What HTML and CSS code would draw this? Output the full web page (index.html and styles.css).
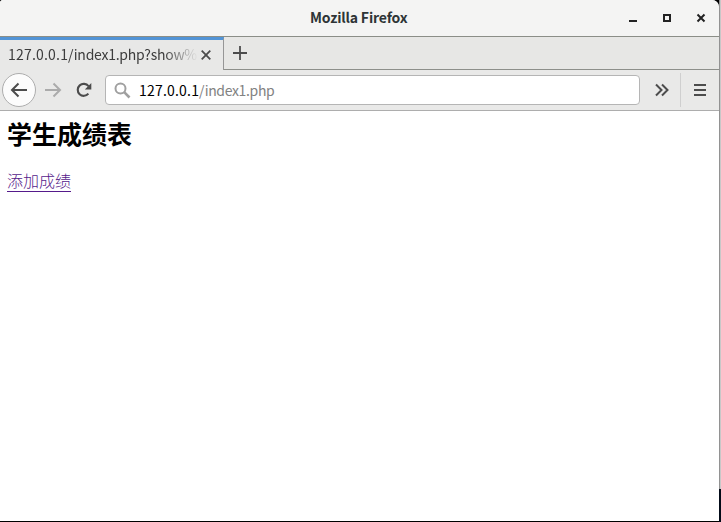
FILE: index.html
```html
<!DOCTYPE html>
<html lang="zh-CN">
<head>
<meta charset="utf-8">
<title>Mozilla Firefox</title>
<link rel="stylesheet" href="styles.css">
</head>
<body>
<div class="window">
  <header class="titlebar">
    <span class="title">Mozilla Firefox</span>
    <div class="controls">
      <svg width="10" height="10"><path d="M1 8H9" stroke-width="2"/></svg>
      <svg width="10" height="10"><rect x="2" y="2" width="6" height="6" stroke-width="2"/></svg>
      <svg width="10" height="10"><path d="M1.5 1.5L8.5 8.5M8.5 1.5L1.5 8.5" stroke-width="2"/></svg>
    </div>
  </header>
  <nav class="tabs">
    <div class="tab">
      <span class="tab-label"><span class="host">127.0.0.1</span>/index1.php?show%</span>
      <svg class="tab-close" width="10" height="10"><path d="M.7.7L9.3 9.3M9.3.7L.7 9.3"/></svg>
    </div>
    <div class="tab-rest">
      <svg width="14" height="14"><path d="M7 0V14M0 7H14"/></svg>
    </div>
  </nav>
  <div class="toolbar">
    <div class="back"><svg width="18" height="16"><path d="M17 8H2M8.5 1.5L2 8L8.5 14.5"/></svg></div>
    <svg class="forward" width="18" height="16"><path d="M1 8H16M9.5 1.5L16 8L9.5 14.5"/></svg>
    <svg class="reload" width="16" height="16"><path d="M12.4 11.6A6 6 0 1 1 12.5 4.2"/><path class="solid" d="M15.3 1V7.5H8.8Z"/></svg>
    <div class="urlbar">
      <svg width="17" height="17"><circle cx="6.5" cy="6.5" r="5"/><path d="M10.2 10.2L15.5 15.5" stroke-width="2.6"/></svg>
      <span class="url"><span class="host">127.0.0.1</span>/index1.php</span>
    </div>
    <svg class="more" width="14" height="14"><path d="M1 1.5L6.5 7L1 12.5M7 1.5L12.5 7L7 12.5"/></svg>
    <div class="menu"><svg width="12" height="12"><path d="M0 1H12M0 6H12M0 11H12"/></svg></div>
  </div>
  <main class="page">
    <h2>学生成绩表</h2>
    <a href="#">添加成绩</a>
  </main>
</div>
<div class="edge"></div>
</body>
</html>
```

FILE: styles.css
```css
* { box-sizing: border-box; }
body {
  margin: 0;
  height: 522px;
  display: flex;
  overflow: hidden;
  background: #000;
  font-family: "Noto Sans CJK SC", sans-serif;
}
svg { display: block; flex: none; fill: none; stroke: #4c4c4c; stroke-width: 2; }
.window {
  width: 719px;
  height: 521px;
  background: #fff;
  border-radius: 3px 7px 0 0;
  overflow: hidden;
  display: flex;
  flex-direction: column;
}
.edge {
  width: 2px;
  height: 522px;
  background: linear-gradient(90deg, #929292 1px, #c8c8c8 1px) no-repeat;
  background-size: 2px 489px;
  background-color: #030b18;
}
.titlebar {
  height: 37px;
  flex: none;
  display: flex;
  align-items: center;
  background: #f4f4f3;
  border-bottom: 1px solid #8b8e87;
}
.title {
  width: 98px;
  margin: -2px 0 0 310px;
  white-space: nowrap;
  font-size: 14px;
  line-height: 20px;
  font-weight: 700;
  letter-spacing: -0.17px;
  color: #2e3436;
}
.controls { display: flex; gap: 24px; margin-left: 220px; }
.controls svg { stroke: #222; }
.tabs { display: flex; flex: none; height: 33px; background: #e8e8e7; }
.tab {
  width: 224px;
  display: flex;
  align-items: center;
  padding-left: 8px;
  border-top: 3px solid #5294d6;
  border-right: 1px solid #969696;
}
.tab-label {
  width: 190px;
  margin-top: -2px;
  white-space: nowrap;
  font-size: 14px;
  line-height: 22px;
  letter-spacing: -0.25px;
  color: #3c3c3c;
  mask-image: linear-gradient(90deg, #000 155px, transparent 190px);
}
.host { letter-spacing: 0.2px; }
.tab-close { margin-left: 3px; }
.tab-close, .tab-rest svg { stroke-width: 1.8; }
.tab-rest {
  flex: 1;
  padding: 9px 0 0 9px;
  background: #e7e7e5;
  border-bottom: 1px solid #8d8f8a;
}
.toolbar {
  height: 41px;
  flex: none;
  display: flex;
  align-items: center;
  background: #e9e9e8;
  border-bottom: 1px solid #adadad;
}
.back {
  width: 34px;
  height: 34px;
  margin-left: 2px;
  display: grid;
  place-items: center;
  background: #fcfcfc;
  border: 1px solid #adadad;
  border-radius: 50%;
}
.forward { margin-left: 8px; stroke: #ababab; }
.reload { margin-left: 14px; stroke-width: 2.1; }
.reload .solid { fill: #4c4c4c; stroke: none; }
.urlbar {
  width: 535px;
  height: 30px;
  margin-left: 13px;
  padding-left: 8px;
  display: flex;
  align-items: center;
  background: #fff;
  border: 1px solid #b5b5b5;
  border-radius: 4px;
}
.urlbar svg { stroke: #a0a0a0; }
.url {
  margin-left: 8px;
  font-size: 14px;
  line-height: 22px;
  letter-spacing: -0.35px;
  color: #828282;
}
.url .host { color: #000; }
.more { margin-left: 15px; }
.menu {
  height: 34px;
  margin-left: 11px;
  padding-left: 13px;
  display: flex;
  align-items: center;
  border-left: 1px solid #cfcfcf;
}
.page { padding: 4px 7px; }
.page h2 {
  margin: 0;
  font-size: 25px;
  line-height: 36px;
  font-weight: 700;
  color: #000;
}
.page a {
  display: inline-block;
  margin-top: 19px;
  height: 22px;
  font-size: 16px;
  line-height: 20px;
  font-weight: 300;
  color: #551a8b;
  text-decoration: none;
  border-bottom: 1px solid #551a8b;
}
```
